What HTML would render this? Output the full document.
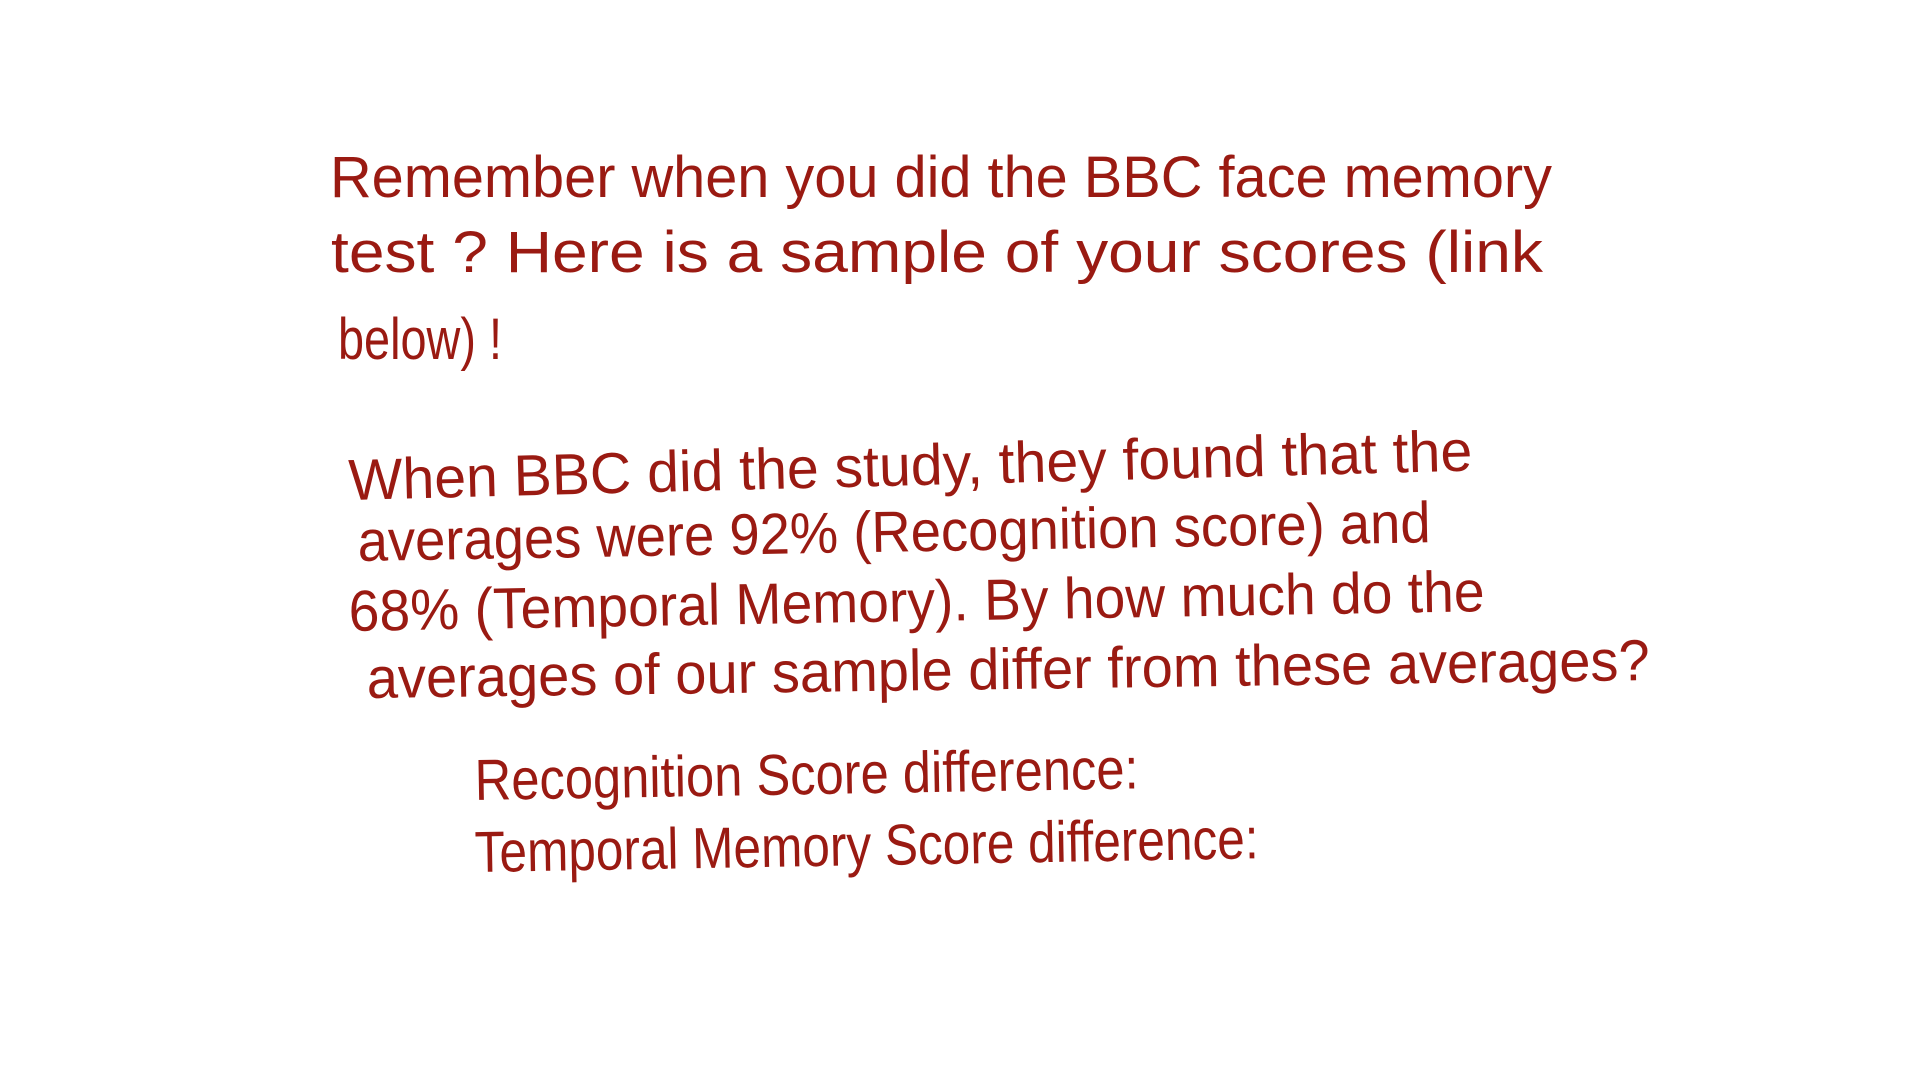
<!DOCTYPE html>
<html><head><meta charset="utf-8"><style>
html,body{margin:0;padding:0;background:#fff;width:1920px;height:1080px;overflow:hidden}
text{font-family:"Liberation Sans",sans-serif;fill:#9a1a12;font-size:58px;}
</style></head><body>
<svg width="1920" height="1080" viewBox="0 0 1920 1080" xmlns="http://www.w3.org/2000/svg">
<text x="330" y="197" textLength="1222" lengthAdjust="spacingAndGlyphs">Remember  when  you  did  the  BBC  face  memory</text>
<text x="331" y="272" textLength="1212" lengthAdjust="spacingAndGlyphs">test ?   Here  is   a   sample   of   your   scores  (link</text>
<text x="338" y="359" textLength="164" lengthAdjust="spacingAndGlyphs">below) !</text>
<text x="349" y="500" textLength="1124" lengthAdjust="spacingAndGlyphs" transform="rotate(-1.5 349 500)">When  BBC  did  the  study,  they  found  that  the</text>
<text x="358" y="561" textLength="1073" lengthAdjust="spacingAndGlyphs" transform="rotate(-1 358 561)">averages  were  92%  (Recognition score)  and</text>
<text x="349" y="631" textLength="1136" lengthAdjust="spacingAndGlyphs" transform="rotate(-1 349 631)">68%  (Temporal Memory).  By  how  much  do  the</text>
<text x="367" y="698" textLength="1283" lengthAdjust="spacingAndGlyphs" transform="rotate(-0.8 367 698)">averages  of  our  sample  differ  from  these  averages?</text>
<text x="475" y="800" textLength="664" lengthAdjust="spacingAndGlyphs" transform="rotate(-1 475 800)">Recognition  Score  difference:</text>
<text x="475" y="872" textLength="784" lengthAdjust="spacingAndGlyphs" transform="rotate(-1 475 872)">Temporal  Memory  Score  difference:</text>
</svg>
</body></html>
